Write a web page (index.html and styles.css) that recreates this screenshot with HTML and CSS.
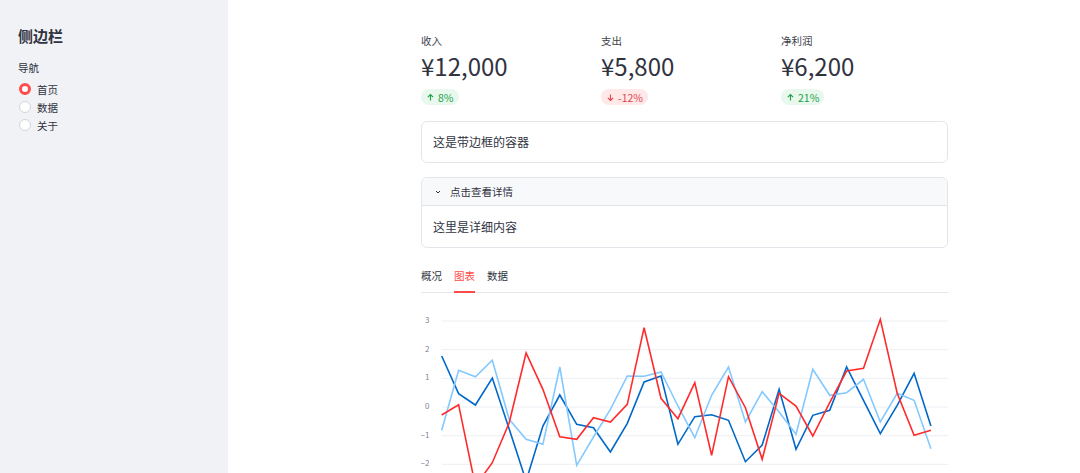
FILE: index.html
```html
<!DOCTYPE html>
<html lang="zh">
<head>
	<meta charset="UTF-8">
	<meta name="viewport" content="width=device-width, initial-scale=1.0">
	<title>侧边栏示例</title>
	<link rel="stylesheet" href="styles.css">
</head>
<body>
<div class="app">

	<aside class="sidebar">
		<h2>侧边栏</h2>
		<div class="field-label">导航</div>
		<div class="radio-group">
			<label class="radio checked"><span class="dot"></span>首页</label>
			<label class="radio"><span class="dot"></span>数据</label>
			<label class="radio"><span class="dot"></span>关于</label>
		</div>
	</aside>

	<main class="main">
		<div class="block">

			<div class="metrics">
				<div class="metric">
					<div class="metric-label">收入</div>
					<div class="metric-value">¥12,000</div>
					<span class="delta up"><svg viewBox="0 0 24 24"><path d="M12 20V5M5 11l7-7 7 7"/></svg>8%</span>
				</div>
				<div class="metric">
					<div class="metric-label">支出</div>
					<div class="metric-value">¥5,800</div>
					<span class="delta down"><svg viewBox="0 0 24 24"><path d="M12 4v15M5 13l7 7 7-7"/></svg>-12%</span>
				</div>
				<div class="metric">
					<div class="metric-label">净利润</div>
					<div class="metric-value">¥6,200</div>
					<span class="delta up"><svg viewBox="0 0 24 24"><path d="M12 20V5M5 11l7-7 7 7"/></svg>21%</span>
				</div>
			</div>

			<div class="bordered">这是带边框的容器</div>

			<div class="expander">
				<div class="exp-head"><svg viewBox="0 0 24 24"><path d="M6 9l6 6 6-6"/></svg>点击查看详情</div>
				<div class="exp-body">这里是详细内容</div>
			</div>

			<div class="tabs">
				<span class="tab">概况</span>
				<span class="tab active">图表</span>
				<span class="tab">数据</span>
			</div>

			<svg class="chart" viewBox="0 0 527 200">
				<g class="grid">
					<line x1="20.7" y1="15" x2="527" y2="15"/>
					<line x1="20.7" y1="43.7" x2="527" y2="43.7"/>
					<line x1="20.7" y1="72.3" x2="527" y2="72.3"/>
					<line x1="20.7" y1="101" x2="527" y2="101"/>
					<line x1="20.7" y1="129.7" x2="527" y2="129.7"/>
					<line x1="20.7" y1="158.3" x2="527" y2="158.3"/>
				</g>
				<g class="ticks">
					<text x="8.5" y="15">3</text>
					<text x="8.5" y="43.7">2</text>
					<text x="8.5" y="72.3">1</text>
					<text x="8.5" y="101">0</text>
					<text x="8.5" y="129.7">−1</text>
					<text x="8.5" y="158.3">−2</text>
				</g>
				<polyline class="s1" points="20.7,50 37.6,87.7 54.4,99 71.3,72 88.2,123 105.1,175 121.9,120 138.8,89 155.7,118.3 172.5,121.7 189.4,146 206.3,117.3 223.1,76 240,70 256.9,138.3 273.8,110.7 290.6,108.7 307.5,114.3 324.4,155.7 341.2,139 358.1,83.3 375,143.3 391.8,109.3 408.7,104.3 425.6,61 442.5,94.3 459.3,127.7 476.2,99.3 493.1,67.3 509.9,120"/>
				<polyline class="s2" points="20.7,124.3 37.6,64.3 54.4,70.7 71.3,54.3 88.2,113.3 105.1,133.3 121.9,138.3 138.8,61 155.7,159.3 172.5,131 189.4,103.3 206.3,70 223.1,70.3 240,66 256.9,100 273.8,131.7 290.6,89.3 307.5,61 324.4,116 341.2,85.7 358.1,106 375,128.3 391.8,63.3 408.7,89.3 425.6,86.7 442.5,73.3 459.3,116 476.2,87.3 493.1,94.3 509.9,142.7"/>
				<polyline class="s3" points="20.7,109 37.6,98.7 54.4,180 71.3,156.7 88.2,116.7 105.1,47 121.9,83.3 138.8,130.7 155.7,133.3 172.5,111.7 189.4,116 206.3,98.3 223.1,21.7 240,92.3 256.9,112.7 273.8,76.7 290.6,149.3 307.5,70.7 324.4,101.7 341.2,153.3 358.1,87.3 375,100 391.8,130 408.7,96.7 425.6,65 442.5,62.3 459.3,13.3 476.2,87.3 493.1,129.3 509.9,124.3"/>
			</svg>

		</div>
	</main>

</div>
</body>
</html>
```

FILE: styles.css
```css
:root{
	font-family: "Noto Sans CJK SC", "Noto Sans", sans-serif;
	color: #31333f;
}

body{
	margin: 0;
	background-color: #fff;
}

.app{
	display: flex;
	height: 100vh;
	overflow: hidden;
}

/* sidebar */

.sidebar{
	width: 228px;
	flex-shrink: 0;
	background-color: #f0f2f6;
	padding: 24px 18px 0;
	box-sizing: border-box;
}

.sidebar h2{
	margin: 0;
	font-size: 15px;
	line-height: 24px;
	font-weight: 700;
}

.field-label{
	margin-top: 12px;
	font-size: 10.5px;
	line-height: 16px;
}

.radio-group{
	display: flex;
	flex-direction: column;
	margin-top: 4px;
}

.radio{
	display: flex;
	align-items: center;
	height: 18px;
	font-size: 10.5px;
}

.radio .dot{
	width: 12px;
	height: 12px;
	border-radius: 50%;
	box-sizing: border-box;
	border: 1px solid #d3d5db;
	background-color: #fff;
	margin: 0 6px 0 1px;
}

.radio.checked .dot{
	border: 3.5px solid #ff4b4b;
	background-color: #fff;
}

/* main */

.main{
	flex: 1;
	padding: 33px 0 0 193px;
}

.block{
	width: 527px;
}

.metrics{
	display: grid;
	grid-template-columns: repeat(3, 1fr);
	column-gap: 13px;
}

.metric-label{
	font-size: 10.5px;
	line-height: 16px;
	color: #3d3f4a;
}

.metric-value{
	font-size: 24px;
	line-height: 32px;
	margin-top: 1px;
}

.delta{
	display: flex;
	width: fit-content;
	align-items: center;
	gap: 3px;
	height: 16px;
	padding: 0 5px;
	border-radius: 8px;
	font-size: 10.5px;
	margin-top: 7px;
}

.delta svg{
	width: 9px;
	height: 9px;
	fill: none;
	stroke: currentColor;
	stroke-width: 3;
}

.delta.up{
	color: #21a14a;
	background-color: #e8f8ed;
}

.delta.down{
	color: #e0464c;
	background-color: #ffe8e8;
}

.bordered{
	margin-top: 16px;
	border: 1px solid #e4e5ea;
	border-radius: 6px;
	padding: 0 11px;
	line-height: 40px;
	font-size: 12px;
}

.expander{
	margin-top: 14px;
	border: 1px solid #e4e5ea;
	border-radius: 6px;
	overflow: hidden;
}

.exp-head{
	display: flex;
	align-items: center;
	height: 27px;
	padding: 0 12px;
	background-color: #f8f9fb;
	border-bottom: 1px solid #e4e5ea;
	font-size: 10.5px;
}

.exp-head svg{
	width: 8px;
	height: 8px;
	fill: none;
	stroke: #31333f;
	stroke-width: 3;
	margin-right: 8px;
}

.exp-body{
	padding: 0 11px;
	line-height: 41px;
	font-size: 12px;
}

.tabs{
	display: flex;
	gap: 12px;
	margin-top: 20px;
	border-bottom: 1px solid #e6e7eb;
}

.tab{
	font-size: 10.5px;
	line-height: 16px;
	padding-bottom: 7px;
	border-bottom: 2px solid transparent;
	margin-bottom: -1px;
}

.tab.active{
	color: #ff4b4b;
	border-bottom-color: #ff4b4b;
}

.chart{
	display: block;
	width: 527px;
	height: 200px;
	margin-top: 13px;
}

.grid line{
	stroke: #eceef3;
	stroke-width: 1;
}

.ticks text{
	font-size: 8px;
	fill: #808495;
	text-anchor: end;
	dominant-baseline: middle;
}

.chart polyline{
	fill: none;
	stroke-width: 1.6;
	stroke-linejoin: miter;
}

.s1{ stroke: #0068c9; }
.s2{ stroke: #83c9ff; }
.s3{ stroke: #ff2b2b; }
```
